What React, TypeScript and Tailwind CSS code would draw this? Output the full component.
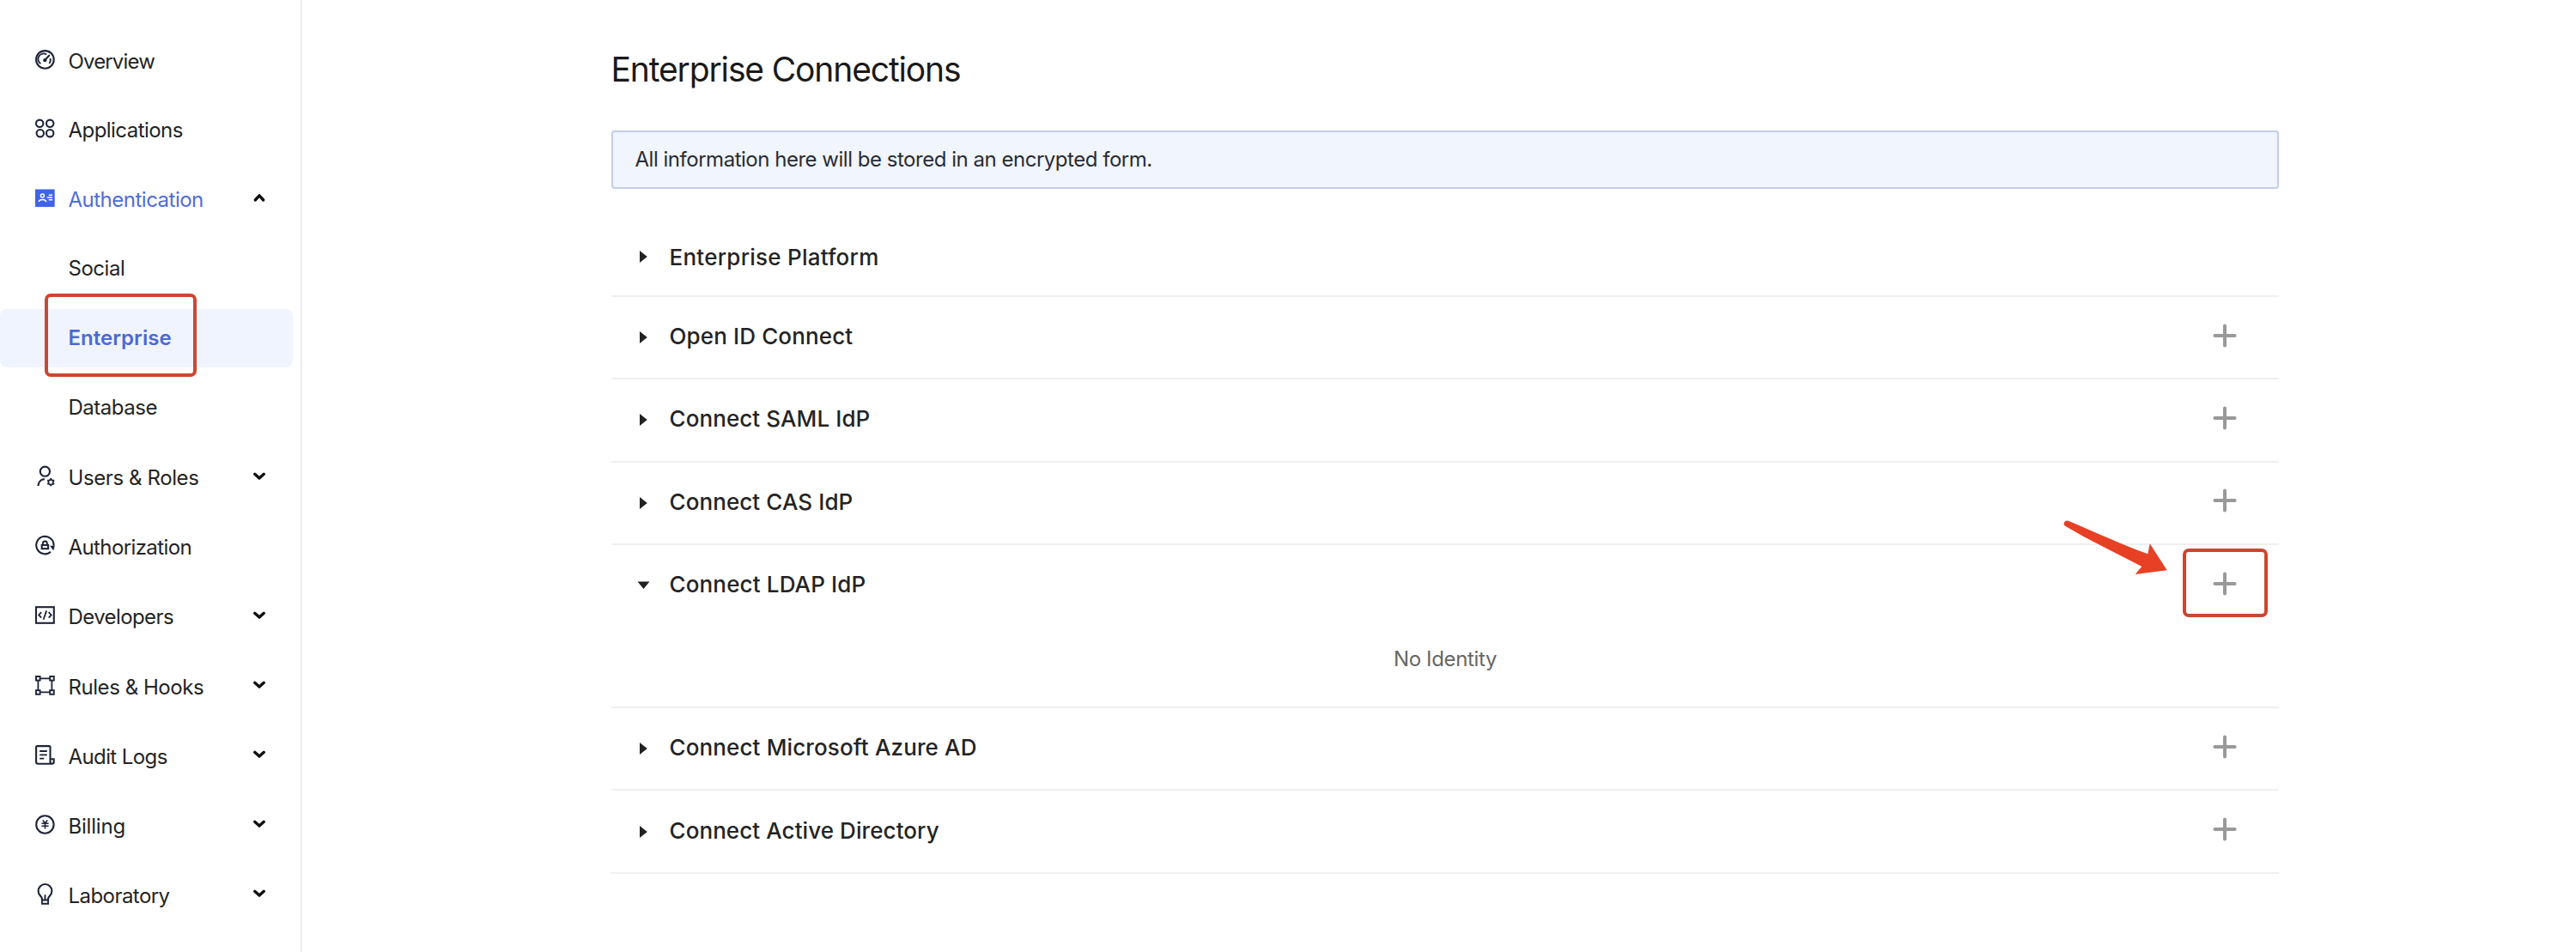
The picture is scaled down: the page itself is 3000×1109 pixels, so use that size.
import type { ReactNode } from "react";

function Icon({ children }: { children: ReactNode }) {
  return (
    <svg
      className="mb-1 h-[23px] w-[23px] shrink-0 overflow-visible"
      viewBox="0 0 23 23"
      fill="none"
      stroke="#1f2338"
      strokeWidth="2.1"
    >
      {children}
    </svg>
  );
}

const icons = {
  overview: (
    <Icon>
      <circle cx="11.4" cy="11.4" r="10.3" />
      <path d="M6.4 16.3A6.3 6.3 0 0 1 13.2 5.4M17.5 10a6.3 6.3 0 0 1-1.2 6" strokeWidth="1.8" />
      <path d="M11.6 11.7l4.6-5" strokeLinecap="round" />
      <circle cx="11.3" cy="12.2" r="2.1" fill="#1f2338" stroke="none" />
    </Icon>
  ),
  apps: (
    <Icon>
      <circle cx="5.2" cy="5.8" r="4.2" />
      <circle cx="17.2" cy="5.8" r="4.2" />
      <circle cx="5.8" cy="17.2" r="4.2" />
      <circle cx="17.2" cy="17.2" r="4.2" />
    </Icon>
  ),
  auth: (
    <Icon>
      <rect x="0" y="1.5" width="22.7" height="20.4" rx="0.6" fill="#3f63ea" stroke="none" />
      <g stroke="#fff" strokeWidth="1.5">
        <circle cx="8.4" cy="8.9" r="2" />
        <path d="M4.2 16.2c.4-1.9 2-2.7 4.3-2.7s3.9.8 4.3 2.7M15.8 8.2h4.2M13.8 11h6.2M15.8 13.8h4.2" />
      </g>
    </Icon>
  ),
  users: (
    <Icon>
      <circle cx="11.4" cy="6.2" r="5.6" />
      <path d="M3.5 23c.1-4.2 2.8-7.600 7.4-7.9" />
      <circle cx="18.2" cy="18.7" r="2.8" strokeWidth="1.7" />
      <path
        d="M18.2 15.700v-1.600M18.2 21.700v1.600M15.600 17.200l-1.400-.8M20.800 20.200l1.400.8M15.600 20.200l-1.400.8M20.800 17.200l1.400-.8"
        strokeWidth="1.900"
      />
    </Icon>
  ),
  authorization: (
    <Icon>
      <path d="M18 18.900A10.200 10.200 0 1 1 21.600 11.800" />
      <path d="M17.200 11.800h5.600l-1.600 5.600z" fill="#1f2338" stroke="none" />
      <rect x="7.700" y="10.900" width="7.400" height="4.300" />
      <path d="M8.900 10.500V9a2.500 2.500 0 0 1 5 0v1.500" strokeWidth="1.800" />
    </Icon>
  ),
  developers: (
    <Icon>
      <rect x="1" y="2.200" width="20.800" height="18.600" />
      <path d="M7.200 8.200l-3 3.200 3 3.200M15.700 8.200l3 3.200-3 3.200M13.200 6.400l-3.600 10.300" strokeWidth="1.800" />
    </Icon>
  ),
  rules: (
    <Icon>
      <path d="M3.400 5v13M19.400 5v13M5 3.400h13M5 19.400h13" strokeWidth="1.800" />
      <g fill="#fff" strokeWidth="1.900">
        <rect x="1" y="1" width="4.600" height="4.600" />
        <rect x="17.200" y="1" width="4.600" height="4.600" />
        <rect x="1" y="17.200" width="4.600" height="4.600" />
        <rect x="17.200" y="17.200" width="4.600" height="4.600" />
      </g>
    </Icon>
  ),
  audit: (
    <Icon>
      <path d="M17.500 15.700V2.100a1 1 0 0 0-1-1H2.100a1 1 0 0 0-1 1v17.400a2.200 2.200 0 0 0 2.200 2.200h16.200a2.200 2.200 0 0 0 2.200-2.200v-3.300h-4.200v3.300a2 2 0 0 0 1.600 2.100" />
      <path d="M5.200 7h8.600M5.200 11.300h8.600M5.200 15.700h5" strokeWidth="1.800" />
    </Icon>
  ),
  billing: (
    <Icon>
      <circle cx="11.400" cy="11.500" r="10.200" />
      <path d="M8.700 6.500l2.800 3.200 2.800-3.200M7.400 10.200h8.200M7.400 13.300h8.200M11.500 9.700v6.800" strokeWidth="1.600" />
    </Icon>
  ),
  laboratory: (
    <Icon>
      <path d="M7.900 18.400v-1.600c0-1.100-.6-1.900-1.600-2.900a7.900 7.900 0 1 1 10.400 0c-1 1-1.600 1.800-1.600 2.900v1.600" />
      <path d="M11.500 12.300v6.100M7.900 18.500h7.200v4.200H7.900z" strokeWidth="1.900" />
    </Icon>
  ),
};

function Chevron({ up }: { up?: boolean }) {
  return (
    <svg
      className="mb-1 ml-auto h-4 w-4"
      viewBox="0 0 16 16"
      fill="none"
      stroke="#101010"
      strokeWidth="3.4"
      strokeLinecap="round"
      strokeLinejoin="round"
    >
      <path d={up ? "M3.300 11L8 5.800L12.700 11" : "M2.700 5.300L8 10.100L13.300 5.300"} />
    </svg>
  );
}

type NavProps = {
  icon: ReactNode;
  label: string;
  tracking: string;
  chevron?: "up" | "down";
  height?: string;
  active?: boolean;
};

function NavItem({ icon, label, tracking, chevron, height = "h-[81.1px]", active }: NavProps) {
  return (
    <div className={`flex items-center pl-[41px] pr-10 ${height}`}>
      {icon}
      <span className={`ml-[15.5px] whitespace-nowrap ${tracking} ${active ? "text-[#506dd6]" : ""}`}>{label}</span>
      {chevron && <Chevron up={chevron === "up"} />}
    </div>
  );
}

const lowerNav: NavProps[] = [
  { icon: icons.users, label: "Users & Roles", tracking: "tracking-[-0.4px]", chevron: "down" },
  { icon: icons.authorization, label: "Authorization", tracking: "tracking-[-0.6px]" },
  { icon: icons.developers, label: "Developers", tracking: "tracking-[-0.6px]", chevron: "down" },
  { icon: icons.rules, label: "Rules & Hooks", tracking: "tracking-[-0.45px]", chevron: "down" },
  { icon: icons.audit, label: "Audit Logs", tracking: "tracking-[-0.6px]", chevron: "down" },
  { icon: icons.billing, label: "Billing", tracking: "tracking-[-0.2px]", chevron: "down" },
  { icon: icons.laboratory, label: "Laboratory", tracking: "tracking-[-0.55px]", chevron: "down" },
];

function Sidebar() {
  return (
    <aside className="h-full w-[352px] shrink-0 border-r-2 border-[#ebebf0] pt-[31px] text-[24px] leading-[29px] text-[#242424]">
      <NavItem icon={icons.overview} label="Overview" tracking="tracking-[-0.85px]" height="h-[80px]" />
      <NavItem icon={icons.apps} label="Applications" tracking="tracking-[-0.55px]" height="h-[81px]" />
      <NavItem
        icon={icons.auth}
        label="Authentication"
        tracking="tracking-[-0.5px]"
        height="h-[80px]"
        chevron="up"
        active
      />
      <div className="pb-[1.2px]">
        <div className="flex h-[81px] items-center pl-[79.5px] tracking-[-0.46px]">Social</div>
        <div className="relative flex h-[81px] items-center">
          <div className="flex h-[68px] w-[341px] items-center rounded-[8px] bg-[#f0f4fe] pl-[79.5px] font-semibold tracking-[0.04px] text-[#4c69d4]">
            Enterprise
          </div>
          <div className="absolute left-[52px] top-[-11px] h-[97px] w-[177px] rounded-[7px] border-4 border-[#cd4630]" />
        </div>
        <div className="flex h-[81px] items-center pl-[79.5px] tracking-[-0.47px]">Database</div>
      </div>
      {lowerNav.map((item) => (
        <NavItem key={item.label} {...item} />
      ))}
    </aside>
  );
}

function Triangle({ open }: { open?: boolean }) {
  return (
    <svg className="h-4 w-4 shrink-0" viewBox="0 0 16 16" fill="#222222">
      <path d={open ? "M1.500 3.500h14L8.500 12z" : "M4 1v14L12.800 8z"} />
    </svg>
  );
}

function Plus() {
  return (
    <svg
      className="mb-[5px] ml-auto h-7 w-7"
      viewBox="0 0 28 28"
      stroke="#999999"
      strokeWidth="4"
      strokeLinecap="round"
    >
      <path d="M14 2.400v23.200M2.400 14h23.200" />
    </svg>
  );
}

type Connection = { name: string; tracking: string; open?: boolean };

const connections: Connection[] = [
  { name: "Open ID Connect", tracking: "tracking-[0.13px]" },
  { name: "Connect SAML IdP", tracking: "tracking-[0.09px]" },
  { name: "Connect CAS IdP", tracking: "tracking-[0.09px]" },
  { name: "Connect LDAP IdP", tracking: "tracking-[0.15px]", open: true },
  { name: "Connect Microsoft Azure AD", tracking: "tracking-[0.13px]" },
  { name: "Connect Active Directory", tracking: "tracking-[0.08px]" },
];

function PointerArrow() {
  return (
    <svg
      className="absolute left-[1688px] top-[-35px] h-[75px] w-[130px]"
      viewBox="0 0 130 75"
      fill="#e84024"
    >
      <path d="M8.200 6.500C40 20 68 33 101.300 45.300L103.700 33.300L123.700 64.300L86.700 69L94.300 60C64 44 34 30 5.100 12.800C2.200 10.600 4 5.600 8.200 6.500Z" />
    </svg>
  );
}

function ConnectionRow({ name, tracking, open }: Connection) {
  return (
    <div className="relative border-b-2 border-[#efefef]">
      <div className="flex h-[94.3px] items-center pl-[29px] pr-[49px]">
        <Triangle open={open} />
        <span className={`mb-[3px] ml-[22.5px] text-[26px] font-medium leading-[31px] ${tracking}`}>{name}</span>
        <Plus />
      </div>
      {open && (
        <>
          <div className="flex h-[94px] items-start justify-center pt-[23.5px] text-[24px] leading-[29px] tracking-[-0.35px] text-[#666666]">
            No Identity
          </div>
          <div className="absolute left-[1829.7px] top-1 h-[80.5px] w-[99px] rounded-[7px] border-4 border-[#cd4630]" />
          <PointerArrow />
        </>
      )}
    </div>
  );
}

export default function App() {
  return (
    <div className="flex h-[1109px] w-[3000px] overflow-hidden bg-white font-['Inter',sans-serif] text-[#242424]">
      <Sidebar />
      <main className="ml-[360px] w-[1942px] pt-[57px]">
        <h1 className="ml-[-0.5px] text-[39px] leading-[47px] tracking-[-1.14px] text-[#1a1a1a]">
          Enterprise Connections
        </h1>
        <div className="mt-12 flex h-[67.5px] items-center rounded-[4px] border-2 border-[#c4cdea] bg-[#f0f5fe] pl-[25.5px] text-[24px] leading-[29px] tracking-[-0.48px] text-[#2a2c33]">
          All information here will be stored in an encrypted form.
        </div>
        <section className="mt-[33.5px]">
          <div className="flex h-[93px] items-center border-b-2 border-[#efefef] pl-[29px]">
            <Triangle />
            <span className="ml-[22.5px] mt-px text-[26px] font-medium leading-[31px] tracking-[0.25px]">
              Enterprise Platform
            </span>
          </div>
          {connections.map((connection) => (
            <ConnectionRow key={connection.name} {...connection} />
          ))}
        </section>
      </main>
    </div>
  );
}
